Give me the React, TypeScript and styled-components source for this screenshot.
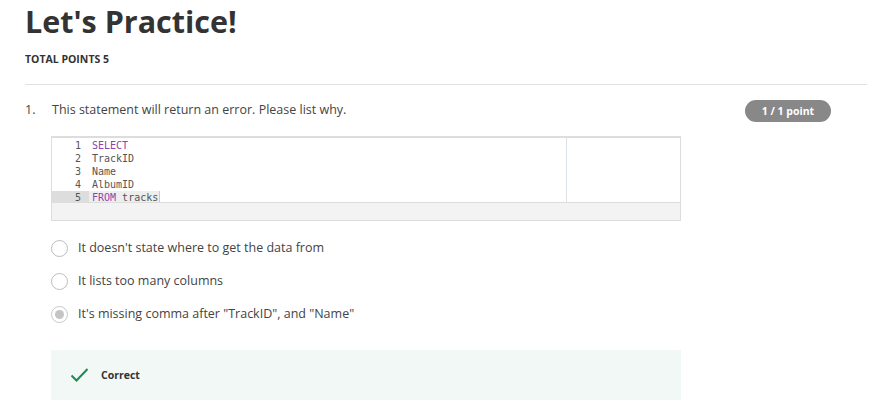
import styled, { createGlobalStyle } from "styled-components";

const GlobalStyle = createGlobalStyle`
  body {
    margin: 0;
    background: #fff;
    font-family: "Open Sans", "Liberation Sans", sans-serif;
    color: #333;
  }
`;

const Page = styled.div`
  padding: 2px 14px 0 25px;
`;

const Title = styled.h1`
  margin: 0;
  font-size: 30.5px;
  line-height: 38px;
  font-weight: 700;
  color: #333;
`;

const TotalPoints = styled.div`
  margin-top: 12px;
  font-size: 10.5px;
  font-weight: 700;
  line-height: 14px;
  color: #333;
`;

const Divider = styled.hr`
  margin: 18px 0 0;
  border: 0;
  border-top: 1px solid #e1e1e1;
`;

const Question = styled.div`
  display: grid;
  grid-template-columns: 27px 1fr auto;
  align-items: start;
  margin-top: 16px;
  padding-right: 36px;
`;

const Number = styled.div`
  font-size: 12.5px;
  line-height: 18px;
  color: #444;
`;

const Prompt = styled.div`
  font-size: 12.5px;
  line-height: 18px;
  color: #444;
`;

const Badge = styled.span`
  display: inline-flex;
  align-items: center;
  justify-content: center;
  width: 86px;
  height: 22px;
  margin-top: -1px;
  border-radius: 11px;
  background: #888;
  color: #fff;
  font-size: 10.5px;
  font-weight: 700;
`;

const Body = styled.div`
  margin-left: 26px;
  width: 630px;
`;

const Editor = styled.div`
  margin-top: 14px;
  border: 1px solid #ddd;
  border-top-width: 2px;
  box-sizing: border-box;
  height: 85px;
  display: flex;
  flex-direction: column;
`;

const EditorMain = styled.div`
  display: flex;
  height: 64px;
`;

const CodePane = styled.div`
  flex: 1;
  border-right: 1px solid #dde2e8;
  padding-top: 1px;
`;

const SidePane = styled.div`
  width: 113px;
`;

const CodeLine = styled.div`
  display: flex;
  height: 13px;
  font-family: "DejaVu Sans Mono", "Liberation Mono", monospace;
  font-size: 10px;
  line-height: 13px;
`;

const Gutter = styled.span<{ $active?: boolean }>`
  width: 29px;
  padding-right: 8px;
  text-align: right;
  color: #555;
  background: ${(p) => (p.$active ? "#ddd" : "transparent")};
`;

const Code = styled.span<{ $active?: boolean }>`
  padding: 0 1px 0 3px;
  color: #555;
  background: ${(p) => (p.$active ? "#eee" : "transparent")};
  border-right: ${(p) => (p.$active ? "1px solid #ccc" : "none")};
`;

const Keyword = styled.span`
  color: #8e44ad;
`;

const EditorFooter = styled.div`
  flex: 1;
  background: #f3f3f3;
  border-top: 1px solid #ddd;
`;

const Options = styled.div`
  display: flex;
  flex-direction: column;
  gap: 15px;
  margin-top: 18px;
`;

const Option = styled.label`
  display: flex;
  align-items: center;
  gap: 10px;
  font-size: 12.5px;
  line-height: 18px;
  color: #444;
`;

const Radio = styled.span<{ $checked?: boolean }>`
  width: 17px;
  height: 17px;
  box-sizing: border-box;
  border-radius: 50%;
  border: 1.5px solid ${(p) => (p.$checked ? "#c8c8c8" : "#bdbdbd")};
  display: flex;
  align-items: center;
  justify-content: center;
  &::after {
    content: "";
    display: ${(p) => (p.$checked ? "block" : "none")};
    width: 9px;
    height: 9px;
    border-radius: 50%;
    background: #c4c4c4;
  }
`;

const Feedback = styled.div`
  margin-top: 27px;
  height: 50px;
  background: #f2f8f6;
  display: flex;
  align-items: center;
  gap: 12px;
  padding-left: 19px;
`;

const FeedbackText = styled.span`
  font-size: 10.5px;
  font-weight: 700;
  color: #333;
`;

function Check() {
  return (
    <svg width="19" height="16" viewBox="0 0 19 16" fill="none">
      <path d="M1.5 8.5 L6.5 13.5 L17.5 2" stroke="#1f8a55" strokeWidth="2" />
    </svg>
  );
}

const lines = [
  <><Keyword>SELECT</Keyword></>,
  <>TrackID</>,
  <>Name</>,
  <>AlbumID</>,
  <><Keyword>FROM</Keyword> tracks</>,
];

const options = [
  { text: "It doesn't state where to get the data from", checked: false },
  { text: "It lists too many columns", checked: false },
  { text: 'It\'s missing comma after "TrackID", and "Name"', checked: true },
];

export default function App() {
  return (
    <>
      <GlobalStyle />
      <Page>
        <Title>Let's Practice!</Title>
        <TotalPoints>TOTAL POINTS 5</TotalPoints>
        <Divider />
        <Question>
          <Number>1.</Number>
          <Prompt>This statement will return an error. Please list why.</Prompt>
          <Badge>1 / 1 point</Badge>
        </Question>
        <Body>
          <Editor>
            <EditorMain>
              <CodePane>
                {lines.map((l, i) => {
                  const active = i === lines.length - 1;
                  return (
                    <CodeLine key={i}>
                      <Gutter $active={active}>{i + 1}</Gutter>
                      <Code $active={active}>{l}</Code>
                    </CodeLine>
                  );
                })}
              </CodePane>
              <SidePane />
            </EditorMain>
            <EditorFooter />
          </Editor>
          <Options>
            {options.map((o) => (
              <Option key={o.text}>
                <Radio $checked={o.checked} />
                {o.text}
              </Option>
            ))}
          </Options>
          <Feedback>
            <Check />
            <FeedbackText>Correct</FeedbackText>
          </Feedback>
        </Body>
      </Page>
    </>
  );
}
